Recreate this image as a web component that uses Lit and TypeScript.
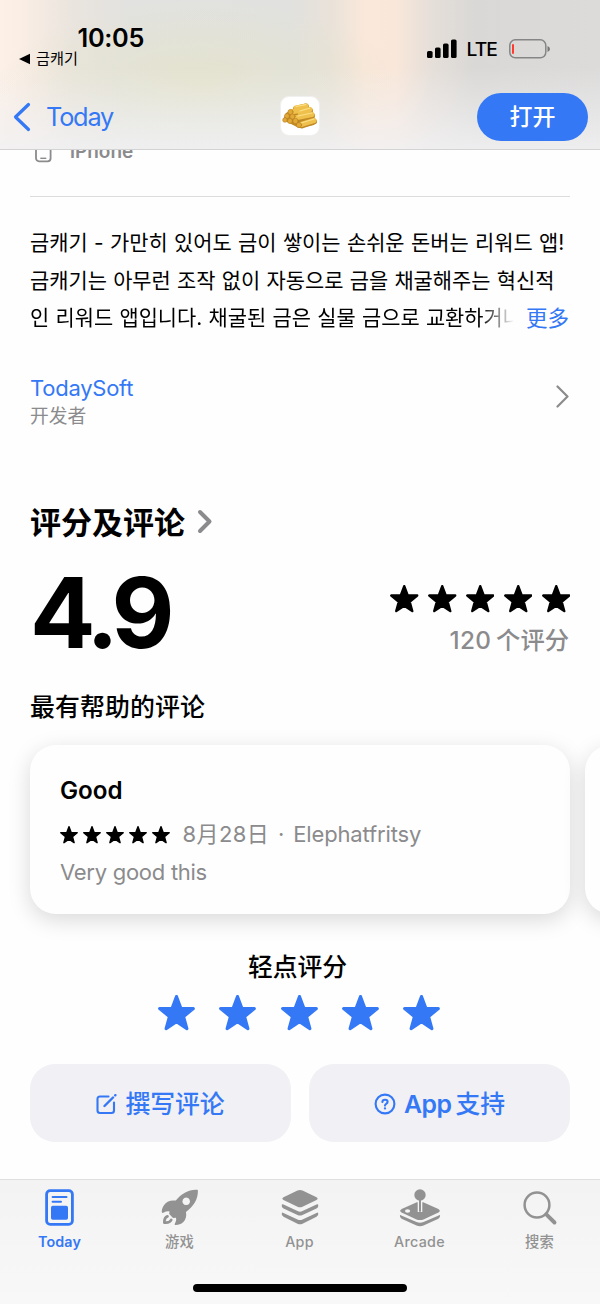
import { LitElement, html, svg, css } from "lit";
import { customElement, property } from "lit/decorators.js";

@customElement("star-row")
class StarRow extends LitElement {
  @property({ type: Number }) count = 5;

  static styles = css`
    :host { display: flex; gap: var(--star-gap, 10px); }
    svg { display: block; width: var(--star-width, 28px); height: var(--star-height, 27px); fill: currentColor; stroke: currentColor; }
  `;

  render() {
    return Array.from({ length: this.count }, () => html`
      <svg viewBox="2 3 96 92" preserveAspectRatio="none" stroke-width="8" stroke-linejoin="round">
        <path d="M50 7L61.4 37.300L93.7 38.200L68.400 59L77 90.2L50 72.500L23 90.2L31.600 59L6.3 38.200L38.600 37.300Z" />
      </svg>`);
  }
}

const todayIcon = svg`<svg width="30" height="38" viewBox="0 0 30 38">
  <rect x="1.6" y="1.6" width="25.8" height="33.8" rx="3.6" fill="none" stroke="currentColor" stroke-width="2.800"/>
  <path d="M7.6 8H21.5M7.6 12.8H16" stroke="currentColor" stroke-width="2" stroke-linecap="round"/>
  <rect x="6" y="16.8" width="17" height="14" rx="1.8" fill="currentColor"/></svg>`;

const rocketIcon = svg`<svg width="38" height="38" viewBox="0 0 38 38">
  <path fill="currentColor" fill-rule="evenodd" d="M36.3 .8C28 .2 20.500 4.500 14.800 11.600C9.500 10.900 5 12.600 2.600 16.700C1.200 19.100 .5 21.800 .8 23.100C1 24.100 2 24.100 2.800 23.600C4.800 22.400 6.600 22 8.500 22.400L8.200 25.100L12 29.100L15 28.700C15.500 30.900 15 32.600 13.900 34.400C13.400 35.400 13.800 36.200 14.800 36.100C17.500 36 20.100 35.100 22.100 33.300C24.800 30.800 25.700 27.200 25 22.900C32.400 17.500 37.200 9.900 36.900 1.700C36.900 1.100 36.700 .8 36.300 .8ZM25.200 8.500a3.800 3.800 0 1 0 .01 0Z"/>
  <path fill="none" stroke="currentColor" stroke-width="2.700" stroke-linecap="round" stroke-linejoin="round" d="M6.500 27.400C4.200 28.200 3.200 30.200 3.400 33.600C6.800 34 9.200 33 10.200 31"/></svg>`;

const layersIcon = svg`<svg width="38" height="38" viewBox="0 0 38 38" fill="currentColor">
  <path d="M16.500 1.600Q19 .5 21.500 1.600L35.500 8.200Q37.800 9.600 35.500 11L21.500 17.700Q19 18.800 16.500 17.700L2.500 11Q.2 9.600 2.500 8.200Z"/>
  <path d="M.8 15.600Q1.400 14.900 2.500 15.500L16.500 22.100Q19 23.200 21.500 22.100L35.500 15.500Q36.600 14.900 37.200 15.600Q37.900 18 35.500 19.400L21.500 26Q19 27.100 16.500 26L2.500 19.400Q.1 18 .8 15.600Z"/>
  <path d="M.8 24Q1.400 23.300 2.500 23.900L16.500 30.500Q19 31.600 21.500 30.500L35.500 23.900Q36.600 23.300 37.200 24Q37.900 26.400 35.500 27.800L21.500 34.700Q19 35.800 16.500 34.700L2.500 27.800Q.1 26.400 .8 24Z"/></svg>`;

const arcadeIcon = svg`<svg width="42" height="38" viewBox="0 0 42 38">
  <path fill="currentColor" d="M17.800 13.300L2.600 20Q-.2 21.800 2.600 23.600L17.500 30.400Q21 31.800 24.500 30.400L39.400 23.600Q42.200 21.800 39.400 20L24.200 13.300Z"/>
  <path fill="currentColor" d="M.9 26.300Q1.300 25.900 2.300 26.400L17.500 33Q21 34.300 24.500 33L39.700 26.400Q40.700 25.900 41.100 26.300Q41.400 28.800 39.400 29.800L24.500 36.600Q21 38 17.500 36.600L2.600 29.800Q.6 28.800 .9 26.300Z"/>
  <ellipse cx="8.600" cy="22" rx="2.600" ry="1.700" fill="#f6f6f6"/>
  <path d="M21 10V23" stroke="#f6f6f6" stroke-width="4.600"/>
  <path d="M21 9V22" stroke="currentColor" stroke-width="2" stroke-linecap="round"/>
  <circle cx="21" cy="6" r="5.700" fill="currentColor"/></svg>`;

const searchIcon = svg`<svg width="36" height="38" viewBox="0 0 36 38" fill="none" stroke="currentColor" stroke-linecap="round">
  <circle cx="15" cy="16" r="12.400" stroke-width="2.500"/><path d="M24.300 25.300L32.500 33.500" stroke-width="3.900"/></svg>`;

const tabs = [
  { label: "Today", icon: todayIcon, active: true },
  { label: "游戏", icon: rocketIcon },
  { label: "App", icon: layersIcon },
  { label: "Arcade", icon: arcadeIcon },
  { label: "搜索", icon: searchIcon },
];

@customElement("app-root")
class AppRoot extends LitElement {
  static styles = css`
    :host {
      display: flex; flex-direction: column; width: 600px; height: 1304px; overflow: hidden;
      background: #fefefe; color: #000; box-sizing: border-box; white-space: nowrap;
      font-family: Inter, "Noto Sans CJK SC", sans-serif;
      --blue: #3478f6; --gray: #8b8b8d;
    }
    * { box-sizing: border-box; }
    svg { display: block; flex: none; }
    .header {
      height: 150px; flex: none; border-bottom: 1px solid #d3d3d3; display: flex; flex-direction: column;
      background:
        linear-gradient(to bottom, rgba(241,242,243,0) 45%, rgba(241,241,243,.85) 100%),
        radial-gradient(ellipse 200px 85px at 200px 85px, rgba(228,227,204,.95), rgba(228,227,204,0)),
        linear-gradient(to right, #fcf0e7 0, #f9ede4 25px, #e9e4de 75px, #e2e2e0 130px, #e1e1df 290px, #e9e2d9 330px, #fae8da 365px, #f9e7da 395px, #e6dfd9 430px, #d9d8d6 475px, #dcdbda 600px);
    }
    .status { display: flex; height: 84px; padding: 24px 50px 0 19px; justify-content: space-between; }
    .clock { font-size: 25.300px; font-weight: 600; line-height: 28px; padding-left: 58.500px; letter-spacing: -.3px; }
    .return { display: flex; align-items: center; gap: 6px; height: 14px; font: 15.200px/14px Inter, "Noto Sans CJK KR", sans-serif; }
    .signals { display: flex; align-items: center; height: 50px; }
    .lte { font-size: 19.200px; font-weight: 500; margin: 0 12px 0 10px; letter-spacing: -.9px; }
    .nav { display: grid; grid-template-columns: 1fr 40px 1fr; align-items: center; height: 66px; padding: 1px 12px 0 12px; }
    .back { display: flex; align-items: center; gap: 15px; color: var(--blue); font-size: 25.300px; line-height: 32px; letter-spacing: -1.200px; padding-top: 1px; }
    .appicon { width: 40px; height: 40px; border-radius: 9px; background: #fff; border: 1px solid #f0f0ee; margin-top: -1px; }
    .open { justify-self: end; width: 111px; height: 48px; border-radius: 24px; background: var(--blue); color: #fff; font-size: 23px; font-weight: 500; line-height: 49px; text-align: center; }
    .content { flex: 1; display: flex; flex-direction: column; padding: 0 30px; }
    .device { height: 47px; flex: none; border-bottom: 1px solid #dcdcdc; overflow: hidden; display: flex; gap: 18px; color: var(--gray); padding-left: 5px; }
    .device svg { margin-top: -15px; }
    .device span { font-size: 19px; line-height: 22px; font-weight: 600; margin-top: -9px; }
    .description { height: 114px; margin-top: 27px; flex: none; font: 20.900px/37.700px Inter, "Noto Sans CJK KR", sans-serif; }
    .line { height: 37.700px; word-spacing: .4px; }
    .first { word-spacing: .5px; }
    .last { display: flex; justify-content: space-between; }
    .clip { width: 484px; overflow: hidden; mask-image: linear-gradient(to right, #000 93%, transparent 100%); }
    .more { color: var(--blue); font: 21.500px/39px Inter, "Noto Sans CJK SC", sans-serif; margin-right: 1px; }
    .developer { height: 56px; margin-top: 37px; flex: none; display: flex; align-items: center; justify-content: space-between; }
    .devname { color: var(--blue); font-size: 22px; line-height: 27px; letter-spacing: -.25px; }
    .role { color: var(--gray); font-size: 18.800px; line-height: 30px; }
    .developer svg { margin: -14px 1px 0 0; }
    .title { margin-top: 71px; height: 40px; flex: none; display: flex; align-items: center; gap: 12px; font-size: 31px; font-weight: 700; }
    .title span { line-height: 40px; padding-top: 1px; }
    .summary { margin-top: 22px; height: 100px; flex: none; display: flex; justify-content: space-between; }
    .score { font-size: 97px; line-height: 98px; font-weight: 700; letter-spacing: -6px; }
    .totals { display: flex; flex-direction: column; align-items: flex-end; padding-top: 21px; }
    .totals span { color: var(--gray); font-size: 24.300px; font-weight: 500; line-height: 30px; }
    .totals .count { margin: 12px 1px 0 0; word-spacing: -1.800px; }
    .totals .num { letter-spacing: .4px; }
    .totals star-row { --star-width: 28.500px; --star-height: 27.500px; --star-gap: 9.300px; }
    .helpful { margin-top: 28px; height: 30px; flex: none; font-size: 24.900px; font-weight: 500; line-height: 30px; letter-spacing: .1px; }
    .cards { margin-top: 23px; height: 169px; flex: none; display: flex; gap: 15px; }
    .card { width: 540px; flex: none; border-radius: 26px; background: #fefefe; box-shadow: 0 6px 22px rgba(0,0,0,.15); padding: 31px 30px; }
    .subject { font-size: 24.200px; font-weight: 600; line-height: 30px; }
    .byline { display: flex; align-items: center; height: 30px; margin-top: 13px; color: var(--gray); font-size: 22px; line-height: 30px; }
    .byline star-row { color: #000; margin: 2px 13px 0 0; --star-width: 18px; --star-height: 17.500px; --star-gap: 4.900px; }
    .date { letter-spacing: .4px; }
    .dot { width: 24px; text-align: center; }
    .author { letter-spacing: -.15px; }
    .text { color: var(--gray); font-size: 22px; line-height: 30px; margin-top: 7.500px; letter-spacing: -.27px; }
    .tap { margin-top: 38px; display: flex; flex-direction: column; align-items: center; font-size: 24.800px; font-weight: 500; line-height: 30px; padding-right: 5px; }
    .tap star-row { color: var(--blue); margin: 13px -3px 0 0; --star-width: 37px; --star-height: 35.500px; --star-gap: 24.200px; }
    .actions { display: grid; grid-template-columns: 1fr 1fr; gap: 18px; margin-top: 33px; }
    .action { height: 78.500px; border-radius: 25px; background: #f0f0f5; color: var(--blue); display: flex; align-items: center; justify-content: center; gap: 8px; font-size: 24.800px; font-weight: 600; line-height: 30px; padding-top: 2.500px; }
    .cjk { font-weight: 500; }
    .support { letter-spacing: -.5px; }
    .support .cjk { margin-left: 4px; letter-spacing: 0; }
    .tabbar { height: 125px; flex: none; border-top: 1px solid #dfdfdf; background: linear-gradient(#f3f3f3, #f8f8f8); display: flex; flex-direction: column; align-items: center; padding-top: 9px; }
    .tabs { display: grid; grid-template-columns: repeat(5, 120px); height: 95px; color: #929292; align-self: stretch; }
    .tab { display: flex; flex-direction: column; align-items: center; gap: 5px; font-size: 14.300px; font-weight: 500; line-height: 20px; letter-spacing: .3px; padding-right: 1px; }
    .active { color: var(--blue); font-weight: 600; letter-spacing: .1px; }
    .home { width: 214px; height: 8px; border-radius: 4px; background: #000; }
  `;

  render() {
    return html`
      <div class="header">
        <div class="status">
          <div>
            <div class="clock">10:05</div>
            <div class="return">
              <svg width="11" height="12"><path d="M0 6L11 .8V11.200Z" /></svg><span>금캐기</span>
            </div>
          </div>
          <div class="signals">
            <svg width="30" height="20"><rect x="0" y="12" width="5.600" height="7" rx="1.600"/><rect x="8" y="8.500" width="5.600" height="10.500" rx="1.600"/><rect x="16" y="4.500" width="5.600" height="14.500" rx="1.600"/><rect x="24" y="0.500" width="5.600" height="18.500" rx="1.600"/></svg>
            <span class="lte">LTE</span>
            <svg width="41" height="20" fill="none"><rect x=".8" y=".8" width="36" height="18" rx="5.500" stroke="#858585" stroke-width="1.500"/><path d="M38.500 7Q41 8 41 10T38.500 13Z" fill="#777"/><rect x="3" y="5" width="2" height="10" rx="1" fill="#ff3b30"/></svg>
          </div>
        </div>
        <div class="nav">
          <div class="back">
            <svg width="19" height="30" fill="none" stroke="currentColor" stroke-width="3.200" stroke-linecap="round" stroke-linejoin="round"><path d="M16.500 2.500L3.500 15L16.500 27.500"/></svg>
            <span>Today</span>
          </div>
          <div class="appicon">
            <svg width="38" height="38" viewBox="0 0 38 38" stroke-linecap="round">
              <path d="M2 23L5 16L15 10L25 8L30 12L35 24L33 28L18 31Z" fill="#c38a24"/>
              <path d="M15 12L25 9.500M20 16.500L29 13.500M14 17L21 15M20 22L31 18.500M21 28.500L33 24.500" stroke="#c08a25" stroke-width="6"/>
              <path d="M15 11L25 9M10 15L20 13M19 15.500L29 12.500M16 20.500L31 17.500M20 27.500L33 23.500" stroke="#efc04c" stroke-width="5"/>
              <path d="M15 9.500L25 7.600M19 14L29 11M17 19L31 16M20 26L33 22" stroke="#fbe087" stroke-width="1.200"/>
              <g fill="#e3a936" stroke="#b27d20" stroke-width=".6"><circle cx="9.500" cy="15" r="2.600"/><circle cx="6" cy="19" r="2.500"/><circle cx="11.500" cy="19.500" r="2.600"/><circle cx="4" cy="23" r="2.300"/><circle cx="9" cy="24" r="2.500"/><circle cx="14.500" cy="24" r="2.700"/><circle cx="18" cy="28" r="2.600"/></g>
            </svg>
          </div>
          <div class="open">打开</div>
        </div>
      </div>

      <div class="content">
        <div class="device">
          <svg width="17" height="28" fill="none" stroke="currentColor" stroke-width="1.800"><rect x="1" y="1" width="14.600" height="25.300" rx="3"/><path d="M5.300 23.300H11.300" stroke-width="1.400"/></svg>
          <span>iPhone</span>
        </div>

        <div class="description">
          <div class="line first">금캐기 - 가만히 있어도 금이 쌓이는 손쉬운 돈버는 리워드 앱!</div>
          <div class="line">금캐기는 아무런 조작 없이 자동으로 금을 채굴해주는 혁신적</div>
          <div class="line last"><div class="clip">인 리워드 앱입니다. 채굴된 금은 실물 금으로 교환하거나</div><span class="more">更多</span></div>
        </div>

        <div class="developer">
          <div><div class="devname">TodaySoft</div><div class="role">开发者</div></div>
          <svg width="13" height="23" fill="none" stroke="#8b8b8d" stroke-width="2.200" stroke-linecap="round" stroke-linejoin="round"><path d="M1.500 1.500L11.500 11.500L1.500 21.500"/></svg>
        </div>

        <div class="title"><span>评分及评论</span>
          <svg width="16" height="26" fill="none" stroke="#8b8b8d" stroke-width="4" stroke-linecap="round" stroke-linejoin="round"><path d="M3 3L12.500 12.500L3 22"/></svg>
        </div>
        <div class="summary">
          <div class="score">4.9</div>
          <div class="totals"><star-row></star-row><span class="count"><span class="num">120</span> 个评分</span></div>
        </div>

        <div class="helpful">最有帮助的评论</div>
        <div class="cards">
          <div class="card">
            <div class="subject">Good</div>
            <div class="byline"><star-row></star-row><span class="date">8月28日</span><span class="dot">·</span><span class="author">Elephatfritsy</span></div>
            <div class="text">Very good this</div>
          </div>
          <div class="card"></div>
        </div>

        <div class="tap"><span>轻点评分</span><star-row></star-row></div>

        <div class="actions">
          <div class="action">
            <svg width="21" height="21" fill="none" stroke="currentColor" stroke-width="2.100" stroke-linecap="round" stroke-linejoin="round"><path d="M12.500 2.500H4Q1.500 2.500 1.500 5V16.500Q1.500 19 4 19H15.500Q18 19 18 16.500V8.500"/><path d="M8.500 12L17 3.500M19.200 1.300L19.400 1.100" stroke-width="2.400"/></svg>
            <span class="cjk">撰写评论</span>
          </div>
          <div class="action">
            <svg width="22" height="22" fill="none" stroke="currentColor" stroke-width="2.100" stroke-linecap="round"><circle cx="11" cy="11" r="9.400"/><path d="M8.400 9Q8.500 6.700 11 6.700Q13.600 6.700 13.600 8.800Q13.600 10 12.200 10.800Q11 11.500 11 12.600"/><path d="M11 15.300V15.400" stroke-width="2.300"/></svg>
            <span class="support">App<span class="cjk">支持</span></span>
          </div>
        </div>
      </div>

      <div class="tabbar">
        <div class="tabs">
          ${tabs.map((t) => html`<div class="tab ${t.active ? "active" : ""}">${t.icon}<span>${t.label}</span></div>`)}
        </div>
        <div class="home"></div>
      </div>
    `;
  }
}
